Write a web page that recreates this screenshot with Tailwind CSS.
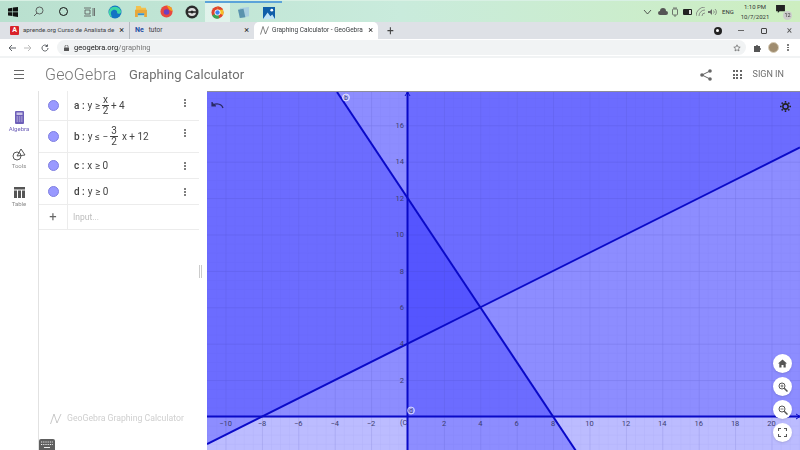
<!DOCTYPE html>
<html lang="en">
<head>
    <meta charset="UTF-8">
    <title>Graphing Calculator - GeoGebra</title>
    <script src="https://cdn.jsdelivr.net/npm/@tailwindcss/browser@4"></script>
</head>
<body class="w-[800px] h-[450px] overflow-hidden bg-white font-['Roboto',sans-serif]">
<div class="flex flex-col w-[800px] h-[450px] blur-[0.5px]">

    <!-- Windows taskbar -->
    <div class="flex items-stretch justify-between h-[22px] bg-gradient-to-r from-[#b9e0cf] via-[#c9ebdc] to-[#cdeec0] border-t border-[#d8f0e4]">
        <div class="flex">
            <div class="w-[25.6px] flex items-center justify-center">
                <svg width="10" height="10" viewBox="0 0 10 10" fill="#111"><path d="M0 1.4 4.4.7v3.9H0zM5 .6 10 0v4.6H5zM0 5.2h4.4v3.9L0 8.5zM5 5.2h5V10L5 9.3z"/></svg>
            </div>
            <div class="w-[25.6px] flex items-center justify-center">
                <svg width="11" height="11" viewBox="0 0 11 11" fill="none" stroke="#444" stroke-width=".8"><circle cx="6.5" cy="4.5" r="3.5"/><path d="M4 7 1 10"/></svg>
            </div>
            <div class="w-[25.6px] flex items-center justify-center">
                <div class="w-[9px] h-[9px] rounded-full border-[1.5px] border-[#111]"></div>
            </div>
            <div class="w-[25.6px] flex items-center justify-center">
                <svg width="11" height="10" viewBox="0 0 11 10" fill="none" stroke="#555" stroke-width=".8"><path d="M0 1h7M0 9h7M1 3h5v4H1zM9 1v8M10.5 1v8"/></svg>
            </div>
            <div class="w-[25.6px] flex items-center justify-center">
                <svg width="14" height="14" viewBox="0 0 14 14"><circle cx="7" cy="7" r="6.5" fill="#1273c4"/><path d="M1 6C2 1 11 0 13 6c.6 3-3 3.500-4 2 1-2-2-4-4-3-2 1-3 3-1 7C1 11 .5 8 1 6z" fill="#3ed6a5"/></svg>
            </div>
            <div class="w-[25.6px] flex items-center justify-center">
                <svg width="12" height="11" viewBox="0 0 13 12"><path d="M1 0h5l1 2h5v3H1z" fill="#f2c14e"/><path d="M0 4h13v8H10V8H3v4H0z" fill="#e9a83a"/><rect x="3" y="8" width="7" height="2" fill="#3d8fc9"/></svg>
            </div>
            <div class="w-[25.6px] flex items-center justify-center">
                <svg width="13" height="13" viewBox="0 0 14 14"><circle cx="7" cy="7" r="6.500" fill="#e8483f"/><path d="M7 .5A6.500 6.500 0 0 1 13.500 7L10 5 8 2z" fill="#f7a11b"/><circle cx="7" cy="7.500" r="3" fill="#6d3fc0"/></svg>
            </div>
            <div class="w-[25.6px] flex items-center justify-center">
                <svg width="14" height="14" viewBox="0 0 14 14"><circle cx="7" cy="7" r="6.500" fill="#2b2b2b"/><circle cx="7" cy="7" r="4" fill="#ddd"/><path d="M3 7h8" stroke="#222" stroke-width="1.500"/><circle cx="7" cy="7" r="1.500" fill="#222"/></svg>
            </div>
            <div class="w-[25.6px] flex items-center justify-center bg-white/50 border-t-2 border-[#5ba3d9]">
                <svg width="13" height="13" viewBox="0 0 14 14"><circle cx="7" cy="7" r="6.500" fill="#e0452f"/><path d="M7 7 1.300 10.200A6.500 6.500 0 0 0 9 13.200z" fill="#3aa655"/><path d="M7 .5a6.500 6.500 0 0 1 5.900 9.200L7 7z" fill="#f6c026"/><path d="M7 .5a6.500 6.500 0 0 1 5.900 3.500H7z" fill="#e0452f"/><circle cx="7" cy="7" r="3.200" fill="#fff"/><circle cx="7" cy="7" r="2.400" fill="#3f82ee"/></svg>
            </div>
            <div class="w-[25.6px] flex items-center justify-center border-t-2 border-[#5ba3d9]">
                <svg width="13" height="12" viewBox="0 0 14 13"><path d="M3 1 13 0v10L3 12z" fill="#a9cfe0"/><path d="M1 3l6-1 2 9-6 1z" fill="#5a93ad"/></svg>
            </div>
            <div class="w-[25.6px] flex items-center justify-center border-t-2 border-[#5ba3d9]">
                <svg width="12" height="12" viewBox="0 0 13 13"><rect width="13" height="13" fill="#0f5ea8"/><path d="M0 13 5 6l3 4 2-2 3 5z" fill="#bfe3f5"/><circle cx="9.500" cy="3.500" r="1.500" fill="#fff"/></svg>
            </div>
        </div>
        <div class="flex items-center pr-[10px] text-[#333]">
            <svg width="9" height="6" viewBox="0 0 9 6" fill="none" stroke="#333" stroke-width=".8"><path d="M1 1l3.500 4L8 1"/></svg>
            <svg class="ml-[6.500px]" width="10" height="7" viewBox="0 0 10 7" fill="#555"><path d="M2 7a2 2 0 0 1 0-4 3 3 0 0 1 6 0 2 2 0 0 1 0 4z"/></svg>
            <svg class="ml-[3px]" width="8" height="10" viewBox="0 0 8 10" fill="none" stroke="#555" stroke-width=".8"><rect x="1.500" y="2" width="5" height="6" rx="1"/><path d="M3 0v2M5 0v2M4 8v2"/></svg>
            <svg class="ml-[4px]" width="10" height="6" viewBox="0 0 10 6"><rect width="9" height="6" rx="1" fill="#222"/><rect x="6" y="1" width="2" height="4" fill="#ddd"/></svg>
            <svg class="ml-[2.500px]" width="9" height="9" viewBox="0 0 9 9" fill="none" stroke="#777" stroke-width=".8"><path d="M0 9A9 9 0 0 1 9 0M3 9a6 6 0 0 1 6-6M6 9a3 3 0 0 1 3-3"/></svg>
            <svg class="ml-[3px]" width="9" height="8" viewBox="0 0 9 8" fill="#666"><path d="M0 3h2l2-2v6L2 5H0z"/><path d="M5.500 2.500a2 2 0 0 1 0 3M7 1a4 4 0 0 1 0 6" fill="none" stroke="#666" stroke-width=".7"/></svg>
            <span class="ml-[3.500px] w-[16px] text-center text-[6px] leading-none">ENG</span>
            <div class="ml-[4px] w-[30px] text-center text-[6px] leading-[9.500px]">
                <div>1:10 PM</div>
                <div>10/7/2021</div>
            </div>
            <div class="relative ml-[6px] w-[14px] h-[14px]">
                <svg class="absolute left-0 top-0" width="9" height="8" viewBox="0 0 10 9" fill="#222"><path d="M0 0h10v7H4L2 9V7H0z"/></svg>
                <span class="absolute right-[-2px] bottom-[-1px] w-[9px] h-[9px] rounded-full bg-[#ccc] text-[5.500px] leading-[9px] text-center">12</span>
            </div>
        </div>
    </div>

    <!-- Chrome tabs -->
    <div class="flex items-end h-[17px] bg-[#dee1e6] text-[6.500px] text-[#3c4043]">
        <div class="flex items-center w-[130px] h-full pl-[10px] pr-[5px] border-r border-[#9aa0a6]/60">
            <div class="flex items-center justify-center w-[9px] h-[9px] rounded-[1px] bg-[#d9222a] text-white text-[7px] font-bold leading-none">A</div>
            <span class="ml-[4px] text-[6.200px] whitespace-nowrap">aprende.org Curso de Analista de</span>
            <span class="ml-auto text-[9px] leading-none text-[#222]">×</span>
        </div>
        <div class="flex items-center w-[124px] h-full pl-[5px] pr-[5px]">
            <span class="text-[7px] font-bold text-[#1f4fa3] leading-none">Ne</span>
            <span class="ml-[5px]">tutor</span>
            <span class="ml-auto text-[9px] leading-none text-[#222]">×</span>
        </div>
        <div class="flex items-center w-[124px] h-full pl-[6px] pr-[5px] bg-white rounded-t-[5px]">
            <svg width="9" height="9" viewBox="0 0 9 9" fill="none" stroke="#666" stroke-width=".8"><path d="M.5 8.500 3 .5 5.500 8 8.500.5"/></svg>
            <span class="ml-[3px] whitespace-nowrap">Graphing Calculator - GeoGebra</span>
            <span class="ml-auto text-[9px] leading-none text-[#222]">×</span>
        </div>
        <span class="ml-[9px] self-center text-[12px] leading-none text-[#444]">+</span>
        <div class="ml-auto flex items-center h-full pr-[8px]">
            <div class="flex items-center justify-center w-[8px] h-[8px] rounded-full bg-[#222]"><div class="w-[3px] h-[3px] rounded-full bg-white"></div></div>
            <div class="ml-[16px] w-[6px] h-px bg-[#666]"></div>
            <div class="ml-[17px] w-[6px] h-[6px] border border-[#444] rounded-[1px]"></div>
            <span class="ml-[20px] text-[10px] leading-none text-[#555]">×</span>
        </div>
    </div>

    <!-- Address bar -->
    <div class="flex items-center h-[19px] border-b-2 border-[#f1f3f4] text-[#5f6368]">
        <svg class="ml-[8px]" width="8" height="8" viewBox="0 0 8 8" fill="none" stroke="#5f6368"><path d="M8 4H1M4 1 1 4l3 3"/></svg>
        <svg class="ml-[8px]" width="8" height="8" viewBox="0 0 8 8" fill="none" stroke="#bbb"><path d="M0 4h7M4 1l3 3-3 3"/></svg>
        <svg class="ml-[9px]" width="8" height="8" viewBox="0 0 8 8" fill="none" stroke="#5f6368"><path d="M7 4a3 3 0 1 1-1-2.200M6.500.5v2h-2"/></svg>
        <div class="flex items-center ml-[8px] w-[689px] h-[15px] rounded-full bg-[#f1f3f4] pl-[7px]">
            <svg width="5" height="6" viewBox="0 0 5 6" fill="#555"><rect y="2.500" width="5" height="3.500" rx=".5"/><path d="M1 2.500V1.500a1.500 1.500 0 0 1 3 0v1" fill="none" stroke="#555" stroke-width=".7"/></svg>
            <span class="ml-[5px] text-[7.500px] text-[#222]">geogebra.org<span class="text-[#777]">/graphing</span></span>
            <svg class="ml-auto mr-[5px]" width="8" height="8" viewBox="0 0 10 10" fill="none" stroke="#555" stroke-width=".8"><path d="m5 1 1.200 2.700 2.800.3-2.100 1.900.6 2.800L5 7.300 2.500 8.700l.6-2.800L1 4l2.800-.3z"/></svg>
        </div>
        <svg class="ml-[8px]" width="8" height="8" viewBox="0 0 8 8" fill="#555"><path d="M0 2h2a1 1 0 0 1 2 0h2v2a1 1 0 0 1 0 2v2H0z"/></svg>
        <div class="ml-[6px] w-[11px] h-[11px] rounded-full bg-[#a08d70] border border-[#d7cdb8]"></div>
        <div class="ml-[8px] flex flex-col gap-px">
            <div class="w-[1.500px] h-[1.500px] rounded-full bg-[#555]"></div>
            <div class="w-[1.500px] h-[1.500px] rounded-full bg-[#555]"></div>
            <div class="w-[1.500px] h-[1.500px] rounded-full bg-[#555]"></div>
        </div>
    </div>

    <!-- GeoGebra header -->
    <div class="flex items-center h-[33px] text-[#6f6f6f]">
        <div class="ml-[14px] flex flex-col gap-[2.500px]">
            <div class="w-[10px] h-[1.500px] bg-[#666]"></div>
            <div class="w-[10px] h-[1.500px] bg-[#666]"></div>
            <div class="w-[10px] h-[1.500px] bg-[#666]"></div>
        </div>
        <span class="ml-[21px] w-[84px] text-[16px] font-light tracking-[0.2px] text-[#777]">GeoGebra</span>
        <span class="text-[13px] tracking-[0.05px]">Graphing Calculator</span>
        <svg class="ml-auto" width="12" height="12" viewBox="0 0 12 12" fill="#666"><circle cx="10" cy="2" r="1.800"/><circle cx="2" cy="6" r="1.800"/><circle cx="10" cy="10" r="1.800"/><path d="M10 2 2 6l8 4" fill="none" stroke="#666"/></svg>
        <div class="ml-[21px] grid grid-cols-3 gap-[1.500px]">
            <div class="w-[2px] h-[2px] bg-[#666]"></div><div class="w-[2px] h-[2px] bg-[#666]"></div><div class="w-[2px] h-[2px] bg-[#666]"></div>
            <div class="w-[2px] h-[2px] bg-[#666]"></div><div class="w-[2px] h-[2px] bg-[#666]"></div><div class="w-[2px] h-[2px] bg-[#666]"></div>
            <div class="w-[2px] h-[2px] bg-[#666]"></div><div class="w-[2px] h-[2px] bg-[#666]"></div><div class="w-[2px] h-[2px] bg-[#666]"></div>
        </div>
        <span class="ml-[11px] mr-[16px] text-[9px]">SIGN IN</span>
    </div>

    <!-- App body -->
    <div class="flex flex-1 min-h-0">
        <!-- Rail -->
        <div class="flex flex-col items-center w-[38px] pt-[20px] text-[6px] text-[#8a8a8a]">
            <svg width="9" height="13" viewBox="0 0 9 13"><rect width="9" height="13" rx="1" fill="#6d5fb8"/><rect x="1.500" y="1.500" width="6" height="2.500" fill="#c9c3e6"/><path d="M1.500 6h6M1.500 8h6M1.500 10h6" stroke="#c9c3e6" stroke-dasharray="1.500 .8"/></svg>
            <span class="text-[#6d5fb8]">Algebra</span>
            <svg class="mt-[15px]" width="14" height="13" viewBox="0 0 14 13" fill="none" stroke="#555"><circle cx="5" cy="8" r="4"/><path d="M5 8 9 1l4 6z"/></svg>
            <span>Tools</span>
            <svg class="mt-[17px]" width="11" height="11" viewBox="0 0 11 11" fill="#555"><rect width="11" height="2.500"/><rect y="3.500" width="3" height="7.500"/><rect x="4" y="3.500" width="3" height="7.500"/><rect x="8" y="3.500" width="3" height="7.500"/></svg>
            <span class="mt-[1px]">Table</span>
        </div>

        <!-- Algebra panel -->
        <div class="relative w-[169px] border-l border-[#e2e2e2] text-[10px] text-[#444]">
            <div class="w-[160px]">
                <div class="flex items-center h-[30px] border-b border-[#ececec]">
                    <div class="flex items-center justify-center w-[29px] h-full border-r border-[#ececec]"><div class="w-[11px] h-[11px] rounded-full bg-[#9999ff] border border-[#7f7fe0]"></div></div>
                    <div class="flex items-center gap-[2px] pl-[6px] flex-1">
                        <span class="font-medium">a :</span><span class="ml-[1px]">y ≥</span>
                        <span class="flex flex-col items-center leading-[10px]"><span class="border-b border-[#444] px-px">x</span><span>2</span></span>
                        <span>+ 4</span>
                    </div>
                    <div class="flex flex-col gap-px mr-[13px] self-start mt-[8px]"><div class="w-[2px] h-[2px] rounded-full bg-[#555]"></div><div class="w-[2px] h-[2px] rounded-full bg-[#555]"></div><div class="w-[2px] h-[2px] rounded-full bg-[#555]"></div></div>
                </div>
                <div class="flex items-center h-[32px] border-b border-[#ececec]">
                    <div class="flex items-center justify-center w-[29px] h-full border-r border-[#ececec]"><div class="w-[11px] h-[11px] rounded-full bg-[#9999ff] border border-[#7f7fe0]"></div></div>
                    <div class="flex items-center gap-[2px] pl-[6px] flex-1">
                        <span class="font-medium">b :</span><span class="ml-[1px]">y ≤ −</span>
                        <span class="flex flex-col items-center leading-[10px]"><span class="border-b border-[#444] px-px">3</span><span>2</span></span>
                        <span class="ml-[2px]">x + 12</span>
                    </div>
                    <div class="flex flex-col gap-px mr-[13px] self-start mt-[8px]"><div class="w-[2px] h-[2px] rounded-full bg-[#555]"></div><div class="w-[2px] h-[2px] rounded-full bg-[#555]"></div><div class="w-[2px] h-[2px] rounded-full bg-[#555]"></div></div>
                </div>
                <div class="flex items-center h-[26px] border-b border-[#ececec]">
                    <div class="flex items-center justify-center w-[29px] h-full border-r border-[#ececec]"><div class="w-[11px] h-[11px] rounded-full bg-[#9999ff] border border-[#7f7fe0]"></div></div>
                    <div class="flex items-center gap-[2px] pl-[6px] flex-1"><span class="font-medium">c :</span><span class="ml-[1px]">x ≥ 0</span></div>
                    <div class="flex flex-col gap-px mr-[13px]"><div class="w-[2px] h-[2px] rounded-full bg-[#555]"></div><div class="w-[2px] h-[2px] rounded-full bg-[#555]"></div><div class="w-[2px] h-[2px] rounded-full bg-[#555]"></div></div>
                </div>
                <div class="flex items-center h-[26px] border-b border-[#ececec]">
                    <div class="flex items-center justify-center w-[29px] h-full border-r border-[#ececec]"><div class="w-[11px] h-[11px] rounded-full bg-[#9999ff] border border-[#7f7fe0]"></div></div>
                    <div class="flex items-center gap-[2px] pl-[6px] flex-1"><span class="font-medium">d :</span><span class="ml-[1px]">y ≥ 0</span></div>
                    <div class="flex flex-col gap-px mr-[13px]"><div class="w-[2px] h-[2px] rounded-full bg-[#555]"></div><div class="w-[2px] h-[2px] rounded-full bg-[#555]"></div><div class="w-[2px] h-[2px] rounded-full bg-[#555]"></div></div>
                </div>
                <div class="flex items-center h-[25px] border-b border-[#ececec]">
                    <div class="flex items-center justify-center w-[29px] h-full border-r border-[#ececec] text-[13px] text-[#666]">+</div>
                    <span class="pl-[5px] text-[8.500px] text-[#bdbdbd]">Input...</span>
                </div>
            </div>
            <div class="absolute right-[5px] top-[174px] w-[3px] h-[13px] border-x border-[#ccc]"></div>
            <div class="absolute left-[11px] top-[321px] flex items-center gap-[5px] text-[8.700px] text-[#cfcfcf]">
                <svg width="12" height="12" viewBox="0 0 12 12" fill="none" stroke="#bbb" stroke-width=".8"><path d="M.5 11 4 1l3 9 4-9"/></svg>
                <span class="whitespace-nowrap">GeoGebra Graphing Calculator</span>
            </div>
            <div class="absolute left-0 bottom-0 flex items-center justify-center w-[16px] h-[11px] rounded-t-[2px] bg-[#5f5f5f]">
                <svg width="12" height="8" viewBox="0 0 12 8" fill="none" stroke="#eee"><path d="M0 1h12M0 3.500h12" stroke-dasharray="1 .8"/><path d="M3 6.500h6"/></svg>
            </div>
        </div>

        <!-- Graphics view -->
        <div class="relative flex-1 overflow-hidden border-t border-[#8d8d9a]">
            <svg class="block" width="593" height="359" viewBox="207 91 593 359" font-family="Roboto, sans-serif" font-size="7.500" fill="#3c3c70">
                <defs>
                    <pattern id="minor" x="407.500" y="415.500" width="9.100" height="9.100" patternUnits="userSpaceOnUse">
                        <path d="M0 0V9.100M0 0H9.100" stroke="#3030a0" stroke-opacity=".08" stroke-width="1" fill="none"/>
                    </pattern>
                    <pattern id="major" x="407.500" y="415.500" width="36.400" height="36.400" patternUnits="userSpaceOnUse">
                        <path d="M0 0V36.400M0 0H36.400" stroke="#3030a0" stroke-opacity=".2" stroke-width="1" fill="none"/>
                    </pattern>
                </defs>
                <rect x="207" y="91" width="593" height="359" fill="#fff"/>
                <!-- inequality regions -->
                <polygon points="207,443 800,146.500 800,91 207,91" fill="#2020ff" fill-opacity=".3"/>
                <polygon points="337,91 576,450 207,450 207,91" fill="#2020ff" fill-opacity=".3"/>
                <rect x="407.500" y="91" width="393" height="359" fill="#2020ff" fill-opacity=".3"/>
                <rect x="207" y="91" width="593" height="324.500" fill="#2020ff" fill-opacity=".3"/>
                <rect x="207" y="91" width="593" height="359" fill="url(#minor)"/>
                <rect x="207" y="91" width="593" height="359" fill="url(#major)"/>
                <!-- boundary lines and axes -->
                <g stroke="#0a0ac8" stroke-width="2" fill="none">
                    <path d="M207 443 800 146.500"/>
                    <path d="M337 91 576 450"/>
                    <path d="M407.500 91V450"/>
                    <path d="M207 415.500H800"/>
                </g>
                <path d="M407.500 91l-2.500 4M407.500 91l2.500 4M800 415.500l-4-2.500M800 415.500l-4 2.500" stroke="#0a0ac8" fill="none"/>
                <!-- axis numbers -->
                <g text-anchor="middle">
                    <text x="225.500" y="425">−10</text><text x="261.900" y="425">−8</text><text x="298.300" y="425">−6</text><text x="334.700" y="425">−4</text><text x="371.100" y="425">−2</text>
                    <text x="444" y="425">2</text><text x="480.300" y="425">4</text><text x="516.700" y="425">6</text><text x="553.100" y="425">8</text><text x="589.500" y="425">10</text><text x="625.900" y="425">12</text><text x="662.300" y="425">14</text><text x="698.700" y="425">16</text><text x="735.100" y="425">18</text><text x="771.500" y="425">20</text>
                </g>
                <g text-anchor="end">
                    <text x="404" y="126.500">16</text><text x="404" y="163">14</text><text x="404" y="200">12</text><text x="404" y="236">10</text><text x="404" y="272.500">8</text><text x="404" y="309">6</text><text x="404" y="345">4</text><text x="404" y="382">2</text>
                </g>
                <text x="400" y="424">(C</text>
                <!-- line labels -->
                <circle cx="346" cy="96.500" r="3.500" fill="#fff" fill-opacity=".35" stroke="#fff" stroke-width=".6"/>
                <text x="346" y="99" text-anchor="middle" font-size="6.500">b</text>
                <circle cx="411" cy="409.500" r="3.500" fill="#fff" fill-opacity=".35" stroke="#fff" stroke-width=".6"/>
                <text x="411" y="412" text-anchor="middle" font-size="6.500">d</text>
            </svg>
            <!-- undo -->
            <svg class="absolute left-[4px] top-[9px]" width="13" height="8" viewBox="0 0 13 8" fill="none" stroke="#2a2a66" stroke-width="1.200"><path d="M12 7C11 3 6 2 2 4"/><path d="M1 1v4h4" fill="#2a2a66"/></svg>
            <!-- settings -->
            <svg class="absolute right-[9px] top-[9px]" width="11" height="11" viewBox="0 0 10 10" fill="none" stroke="#222" stroke-width="1.400"><circle cx="5" cy="5" r="2.400"/><path d="M5 0v1.500M5 8.500V10M0 5h1.500M8.500 5H10M1.500 1.500l1 1M7.500 7.500l1 1M8.500 1.500l-1 1M2.500 7.500l-1 1"/></svg>
            <!-- view controls -->
            <div class="absolute right-[8px] top-[262px] flex flex-col gap-[4px]">
                <div class="flex items-center justify-center w-[19px] h-[19px] rounded-full bg-white shadow-sm">
                    <svg width="9" height="9" viewBox="0 0 9 9" fill="#555"><path d="M4.500.5 0 4.500h1.300V8.500h2.200V6h2v2.500h2.200V4.500H9z"/></svg>
                </div>
                <div class="flex items-center justify-center w-[19px] h-[19px] rounded-full bg-white shadow-sm">
                    <svg width="10" height="10" viewBox="0 0 10 10" fill="none" stroke="#555"><circle cx="4" cy="4" r="3"/><path d="M6.200 6.200 9.500 9.500" stroke-width="1.500"/><path d="M2.500 4h3M4 2.500v3" stroke-width=".8"/></svg>
                </div>
                <div class="flex items-center justify-center w-[19px] h-[19px] rounded-full bg-white shadow-sm">
                    <svg width="10" height="10" viewBox="0 0 10 10" fill="none" stroke="#555"><circle cx="4" cy="4" r="3"/><path d="M6.200 6.200 9.500 9.500" stroke-width="1.500"/><path d="M2.500 4h3" stroke-width=".8"/></svg>
                </div>
                <div class="flex items-center justify-center w-[19px] h-[19px] rounded-full bg-white shadow-sm">
                    <svg width="9" height="9" viewBox="0 0 9 9" fill="none" stroke="#555" stroke-width="1.100"><path d="M.5 3V.5H3M6 .5h2.500V3M8.500 6v2.500H6M3 8.500H.5V6"/></svg>
                </div>
            </div>
        </div>
    </div>
</div>
</body>
</html>
